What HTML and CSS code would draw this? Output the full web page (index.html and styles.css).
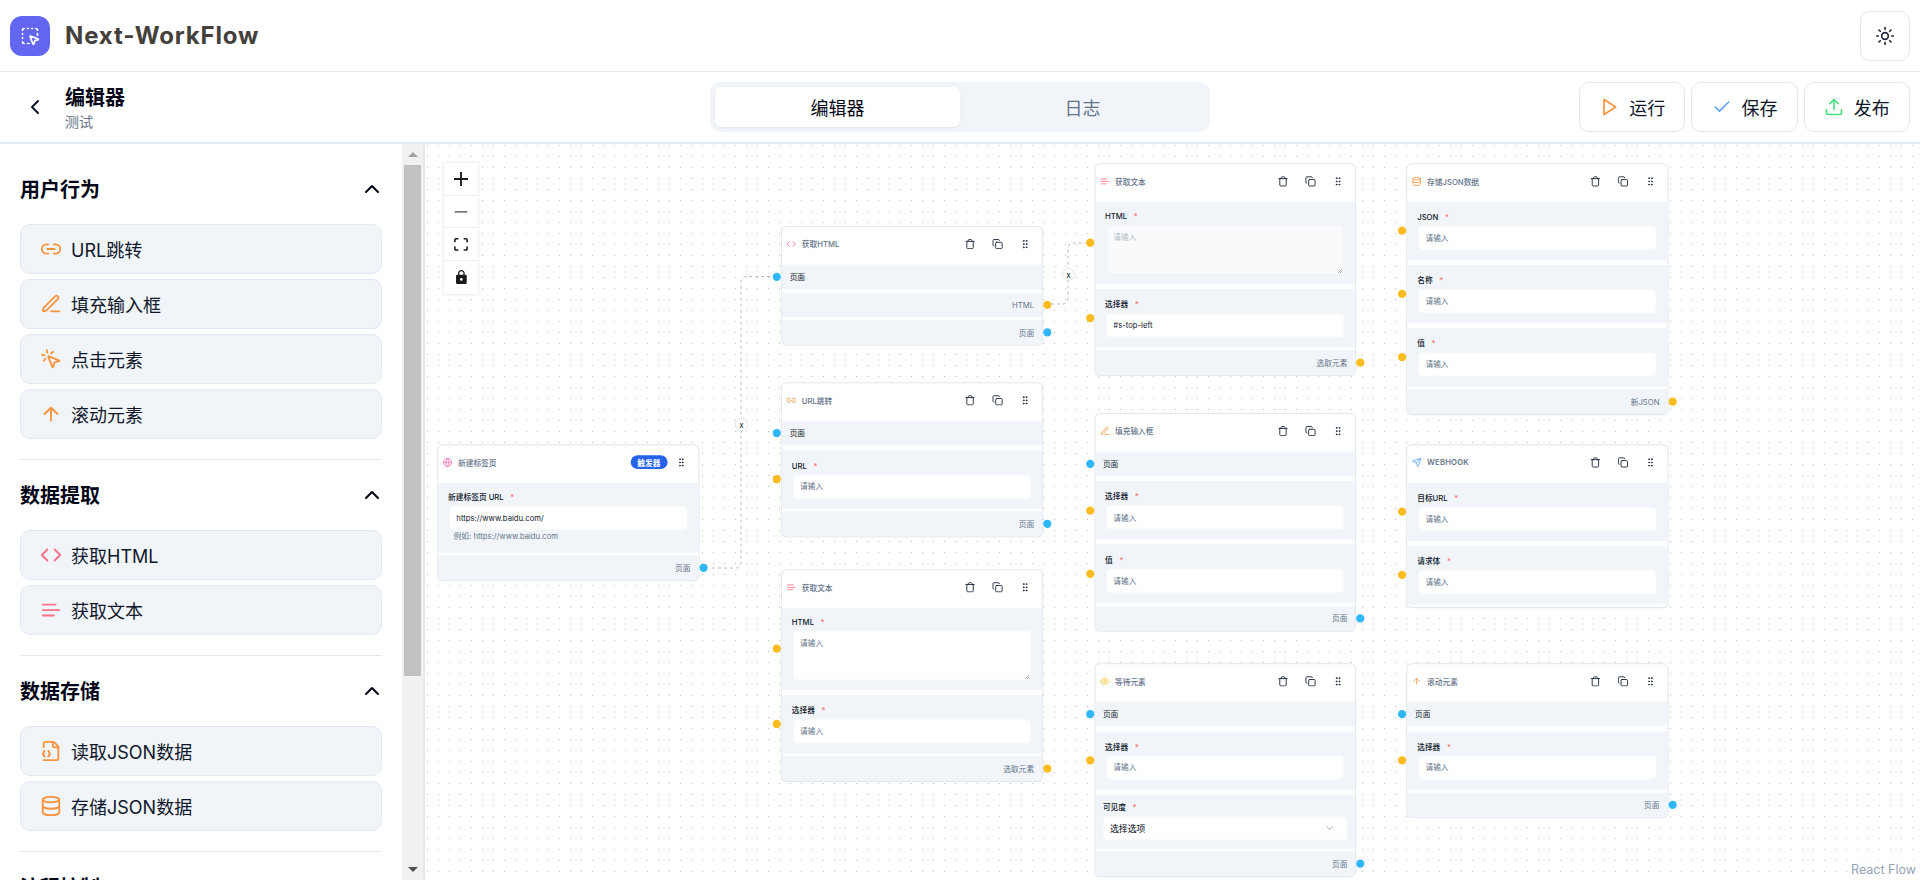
FILE: index.html
```html
<!DOCTYPE html>
<html lang="zh-CN">
<head>
  <meta charset="UTF-8">
  <meta name="viewport" content="width=device-width, initial-scale=1.0">
  <title>Next-WorkFlow</title>
  <link rel="stylesheet" href="styles.css">
</head>
<body>
  <svg class="sprites" aria-hidden="true">
    <symbol id="i-logo" viewBox="0 0 24 24"><path d="M12.034 12.681a.498.498 0 0 1 .647-.647l9 3.5a.5.5 0 0 1-.033.943l-3.444 1.068a1 1 0 0 0-.66.66l-1.067 3.443a.5.5 0 0 1-.943.033z"/><path d="M5 3a2 2 0 0 0-2 2"/><path d="M19 3a2 2 0 0 1 2 2"/><path d="M5 21a2 2 0 0 1-2-2"/><path d="M9 3h1"/><path d="M9 21h2"/><path d="M14 3h1"/><path d="M3 9v1"/><path d="M21 9v2"/><path d="M3 14v1"/></symbol>
    <symbol id="i-sun" viewBox="0 0 24 24"><circle cx="12" cy="12" r="4"/><path d="M12 2v2"/><path d="M12 20v2"/><path d="m4.93 4.93 1.41 1.41"/><path d="m17.66 17.66 1.41 1.41"/><path d="M2 12h2"/><path d="M20 12h2"/><path d="m6.34 17.66-1.41 1.41"/><path d="m19.07 4.93-1.41 1.41"/></symbol>
    <symbol id="i-left" viewBox="0 0 24 24"><path d="m15 18-6-6 6-6"/></symbol>
    <symbol id="i-up" viewBox="0 0 24 24"><path d="m18 15-6-6-6 6"/></symbol>
    <symbol id="i-down" viewBox="0 0 24 24"><path d="m6 9 6 6 6-6"/></symbol>
    <symbol id="i-play" viewBox="0 0 24 24"><polygon points="6 3 20 12 6 21 6 3"/></symbol>
    <symbol id="i-check" viewBox="0 0 24 24"><path d="M20 6 9 17l-5-5"/></symbol>
    <symbol id="i-upload" viewBox="0 0 24 24"><path d="M21 15v4a2 2 0 0 1-2 2H5a2 2 0 0 1-2-2v-4"/><polyline points="17 8 12 3 7 8"/><line x1="12" x2="12" y1="3" y2="15"/></symbol>
    <symbol id="i-link" viewBox="0 0 24 24"><path d="M9 17H7A5 5 0 0 1 7 7h2"/><path d="M15 7h2a5 5 0 1 1 0 10h-2"/><line x1="8" x2="16" y1="12" y2="12"/></symbol>
    <symbol id="i-pen" viewBox="0 0 24 24"><path d="M12 20h9"/><path d="M16.376 3.622a1 1 0 0 1 3.002 3.002L7.368 18.635a2 2 0 0 1-.855.506l-2.872.838a.5.5 0 0 1-.62-.62l.838-2.872a2 2 0 0 1 .506-.854z"/></symbol>
    <symbol id="i-click" viewBox="0 0 24 24"><path d="M14 4.1 12 6"/><path d="m5.1 8-2.9-.8"/><path d="m6 12-1.9 2"/><path d="M7.2 2.2 8 5.1"/><path d="M9.037 9.69a.498.498 0 0 1 .653-.653l11 4.5a.5.5 0 0 1-.074.949l-4.349 1.041a1 1 0 0 0-.74.739l-1.04 4.35a.5.5 0 0 1-.95.074z"/></symbol>
    <symbol id="i-arrow" viewBox="0 0 24 24"><path d="m5 12 7-7 7 7"/><path d="M12 19V5"/></symbol>
    <symbol id="i-code" viewBox="0 0 24 24"><path d="m16 18 6-6-6-6"/><path d="m8 6-6 6 6 6"/></symbol>
    <symbol id="i-text" viewBox="0 0 24 24"><path d="M17 6.1H3"/><path d="M21 12.1H3"/><path d="M15.1 18H3"/></symbol>
    <symbol id="i-file" viewBox="0 0 24 24"><path d="M4 22h14a2 2 0 0 0 2-2V7l-5-5H6a2 2 0 0 0-2 2v4"/><path d="M14 2v4a2 2 0 0 0 2 2h4"/><path d="M5 12a1 1 0 0 0-1 1v1a1 1 0 0 1-1 1 1 1 0 0 1 1 1v1a1 1 0 0 0 1 1"/><path d="M9 18a1 1 0 0 0 1-1v-1a1 1 0 0 1 1-1 1 1 0 0 1-1-1v-1a1 1 0 0 0-1-1"/></symbol>
    <symbol id="i-db" viewBox="0 0 24 24"><ellipse cx="12" cy="5" rx="9" ry="3"/><path d="M3 5V19A9 3 0 0 0 21 19V5"/><path d="M3 12A9 3 0 0 0 21 12"/></symbol>
    <symbol id="i-globe" viewBox="0 0 24 24"><circle cx="12" cy="12" r="10"/><path d="M12 2a14.5 14.5 0 0 0 0 20 14.5 14.5 0 0 0 0-20"/><path d="M2 12h20"/></symbol>
    <symbol id="i-eye" viewBox="0 0 24 24"><path d="M2.062 12.348a1 1 0 0 1 0-.696 10.75 10.75 0 0 1 19.876 0 1 1 0 0 1 0 .696 10.75 10.75 0 0 1-19.876 0"/><circle cx="12" cy="12" r="3"/></symbol>
    <symbol id="i-send" viewBox="0 0 24 24"><path d="M14.536 21.686a.5.5 0 0 0 .937-.024l6.5-19a.496.496 0 0 0-.635-.635l-19 6.5a.5.5 0 0 0-.024.937l7.93 3.18a2 2 0 0 1 1.112 1.11z"/><path d="m21.854 2.147-10.94 10.939"/></symbol>
    <symbol id="i-trash" viewBox="0 0 24 24"><path d="M3 6h18"/><path d="M19 6v14c0 1-1 2-2 2H7c-1 0-2-1-2-2V6"/><path d="M8 6V4c0-1 1-2 2-2h4c1 0 2 1 2 2v2"/></symbol>
    <symbol id="i-copy" viewBox="0 0 24 24"><rect x="8" y="8" width="14" height="14" rx="2"/><path d="M4 16c-1.1 0-2-.9-2-2V4c0-1.1.9-2 2-2h10c1.1 0 2 .9 2 2"/></symbol>
    <symbol id="i-grip" viewBox="0 0 24 24"><circle cx="9" cy="12" r="1"/><circle cx="9" cy="5" r="1"/><circle cx="9" cy="19" r="1"/><circle cx="15" cy="12" r="1"/><circle cx="15" cy="5" r="1"/><circle cx="15" cy="19" r="1"/></symbol>
  </svg>

  <header class="topbar">
    <div class="brand">
      <span class="logo"><svg class="icon logo-icon"><use href="#i-logo"/></svg></span>
      <span class="brand-name">Next-WorkFlow</span>
    </div>
    <button class="btn btn-square"><svg class="icon icon-20"><use href="#i-sun"/></svg></button>
  </header>

  <div class="subbar">
    <div class="page-title">
      <svg class="icon icon-24 back"><use href="#i-left"/></svg>
      <div>
        <div class="page-name">编辑器</div>
        <div class="page-sub">测试</div>
      </div>
    </div>
    <div class="tabs">
      <div class="tab tab-active">编辑器</div>
      <div class="tab">日志</div>
    </div>
    <div class="actions">
      <button class="btn btn-action"><svg class="icon icon-20 c-orange"><use href="#i-play"/></svg>运行</button>
      <button class="btn btn-action"><svg class="icon icon-20 c-blue"><use href="#i-check"/></svg>保存</button>
      <button class="btn btn-action"><svg class="icon icon-20 c-green"><use href="#i-upload"/></svg>发布</button>
    </div>
  </div>

  <main class="main">
    <aside class="sidebar">
      <div class="palette">
        <section class="group">
          <div class="group-head">用户行为<svg class="icon icon-24"><use href="#i-up"/></svg></div>
          <div class="item"><svg class="icon icon-22 c-orange"><use href="#i-link"/></svg>URL跳转</div>
          <div class="item"><svg class="icon icon-22 c-orange"><use href="#i-pen"/></svg>填充输入框</div>
          <div class="item"><svg class="icon icon-22 c-orange"><use href="#i-click"/></svg>点击元素</div>
          <div class="item"><svg class="icon icon-22 c-orange"><use href="#i-arrow"/></svg>滚动元素</div>
        </section>
        <section class="group">
          <div class="group-head">数据提取<svg class="icon icon-24"><use href="#i-up"/></svg></div>
          <div class="item"><svg class="icon icon-22 c-rose"><use href="#i-code"/></svg>获取HTML</div>
          <div class="item"><svg class="icon icon-22 c-rose"><use href="#i-text"/></svg>获取文本</div>
        </section>
        <section class="group">
          <div class="group-head">数据存储<svg class="icon icon-24"><use href="#i-up"/></svg></div>
          <div class="item"><svg class="icon icon-22 c-orange"><use href="#i-file"/></svg>读取JSON数据</div>
          <div class="item"><svg class="icon icon-22 c-orange"><use href="#i-db"/></svg>存储JSON数据</div>
        </section>
        <section class="group">
          <div class="group-head">流程控制<svg class="icon icon-24"><use href="#i-up"/></svg></div>
        </section>
      </div>
      <div class="scrollbar">
        <span class="scroll-up"></span>
        <span class="scroll-thumb"></span>
        <span class="scroll-down"></span>
      </div>
    </aside>

    <div class="canvas">
      <svg class="edges">
        <path d="M287 424H311a5 5 0 0 0 5-5V137.500a5 5 0 0 1 5-5H348"/>
        <path d="M626 160H638a5 5 0 0 0 5-5V104a5 5 0 0 1 5-5H661"/>
      </svg>

      <div class="viewport">
        <div class="node n-tab">
          <div class="node-head">
            <svg class="icon node-icon c-pink"><use href="#i-globe"/></svg>
            <span class="node-title">新建标签页</span>
            <div class="node-tools">
              <span class="badge">触发器</span>
              <span class="tool"><svg class="icon tool-icon"><use href="#i-grip"/></svg></span>
            </div>
          </div>
          <div class="sect field field-hint">
            <label class="lbl">新建标签页 URL<i class="req">*</i></label>
            <input class="inp" value="https://www.baidu.com/">
            <div class="hint">例如: https://www.baidu.com</div>
          </div>
          <div class="sect out"><span class="handle right blue"></span>页面</div>
        </div>

        <div class="node n-html">
          <div class="node-head">
            <svg class="icon node-icon c-rose"><use href="#i-code"/></svg>
            <span class="node-title">获取HTML</span>
            <div class="node-tools">
              <span class="tool"><svg class="icon tool-icon"><use href="#i-trash"/></svg></span>
              <span class="tool"><svg class="icon tool-icon"><use href="#i-copy"/></svg></span>
              <span class="tool"><svg class="icon tool-icon"><use href="#i-grip"/></svg></span>
            </div>
          </div>
          <div class="sect in"><span class="handle left blue"></span>页面</div>
          <div class="sect out"><span class="handle right yellow"></span>HTML</div>
          <div class="sect out"><span class="handle right blue"></span>页面</div>
        </div>

        <div class="node n-url">
          <div class="node-head">
            <svg class="icon node-icon c-orange"><use href="#i-link"/></svg>
            <span class="node-title">URL跳转</span>
            <div class="node-tools">
              <span class="tool"><svg class="icon tool-icon"><use href="#i-trash"/></svg></span>
              <span class="tool"><svg class="icon tool-icon"><use href="#i-copy"/></svg></span>
              <span class="tool"><svg class="icon tool-icon"><use href="#i-grip"/></svg></span>
            </div>
          </div>
          <div class="sect in"><span class="handle left blue"></span>页面</div>
          <div class="sect field">
            <span class="handle left yellow"></span>
            <label class="lbl">URL<i class="req">*</i></label>
            <input class="inp" placeholder="请输入">
          </div>
          <div class="sect out"><span class="handle right blue"></span>页面</div>
        </div>

        <div class="node n-text1">
          <div class="node-head">
            <svg class="icon node-icon c-rose"><use href="#i-text"/></svg>
            <span class="node-title">获取文本</span>
            <div class="node-tools">
              <span class="tool"><svg class="icon tool-icon"><use href="#i-trash"/></svg></span>
              <span class="tool"><svg class="icon tool-icon"><use href="#i-copy"/></svg></span>
              <span class="tool"><svg class="icon tool-icon"><use href="#i-grip"/></svg></span>
            </div>
          </div>
          <div class="sect field field-area">
            <span class="handle left yellow"></span>
            <label class="lbl">HTML<i class="req">*</i></label>
            <textarea class="inp area" placeholder="请输入"></textarea>
          </div>
          <div class="sect field">
            <span class="handle left yellow"></span>
            <label class="lbl">选择器<i class="req">*</i></label>
            <input class="inp" placeholder="请输入">
          </div>
          <div class="sect out"><span class="handle right yellow"></span>选取元素</div>
        </div>

        <div class="node n-text2">
          <div class="node-head">
            <svg class="icon node-icon c-rose"><use href="#i-text"/></svg>
            <span class="node-title">获取文本</span>
            <div class="node-tools">
              <span class="tool"><svg class="icon tool-icon"><use href="#i-trash"/></svg></span>
              <span class="tool"><svg class="icon tool-icon"><use href="#i-copy"/></svg></span>
              <span class="tool"><svg class="icon tool-icon"><use href="#i-grip"/></svg></span>
            </div>
          </div>
          <div class="sect field field-area">
            <span class="handle left yellow"></span>
            <label class="lbl">HTML<i class="req">*</i></label>
            <textarea class="inp area" placeholder="请输入" disabled></textarea>
          </div>
          <div class="sect field">
            <span class="handle left yellow"></span>
            <label class="lbl">选择器<i class="req">*</i></label>
            <input class="inp" value="#s-top-left">
          </div>
          <div class="sect out"><span class="handle right yellow"></span>选取元素</div>
        </div>

        <div class="node n-fill">
          <div class="node-head">
            <svg class="icon node-icon c-orange"><use href="#i-pen"/></svg>
            <span class="node-title">填充输入框</span>
            <div class="node-tools">
              <span class="tool"><svg class="icon tool-icon"><use href="#i-trash"/></svg></span>
              <span class="tool"><svg class="icon tool-icon"><use href="#i-copy"/></svg></span>
              <span class="tool"><svg class="icon tool-icon"><use href="#i-grip"/></svg></span>
            </div>
          </div>
          <div class="sect in"><span class="handle left blue"></span>页面</div>
          <div class="sect field">
            <span class="handle left yellow"></span>
            <label class="lbl">选择器<i class="req">*</i></label>
            <input class="inp" placeholder="请输入">
          </div>
          <div class="sect field">
            <span class="handle left yellow"></span>
            <label class="lbl">值<i class="req">*</i></label>
            <input class="inp" placeholder="请输入">
          </div>
          <div class="sect out"><span class="handle right blue"></span>页面</div>
        </div>

        <div class="node n-wait">
          <div class="node-head">
            <svg class="icon node-icon c-amber"><use href="#i-eye"/></svg>
            <span class="node-title">等待元素</span>
            <div class="node-tools">
              <span class="tool"><svg class="icon tool-icon"><use href="#i-trash"/></svg></span>
              <span class="tool"><svg class="icon tool-icon"><use href="#i-copy"/></svg></span>
              <span class="tool"><svg class="icon tool-icon"><use href="#i-grip"/></svg></span>
            </div>
          </div>
          <div class="sect in"><span class="handle left blue"></span>页面</div>
          <div class="sect field">
            <span class="handle left yellow"></span>
            <label class="lbl">选择器<i class="req">*</i></label>
            <input class="inp" placeholder="请输入">
          </div>
          <div class="sect field field-select">
            <label class="lbl">可见度<i class="req">*</i></label>
            <button class="select">选择选项<svg class="icon select-icon"><use href="#i-down"/></svg></button>
          </div>
          <div class="sect out"><span class="handle right blue"></span>页面</div>
        </div>

        <div class="node n-json">
          <div class="node-head">
            <svg class="icon node-icon c-orange"><use href="#i-db"/></svg>
            <span class="node-title">存储JSON数据</span>
            <div class="node-tools">
              <span class="tool"><svg class="icon tool-icon"><use href="#i-trash"/></svg></span>
              <span class="tool"><svg class="icon tool-icon"><use href="#i-copy"/></svg></span>
              <span class="tool"><svg class="icon tool-icon"><use href="#i-grip"/></svg></span>
            </div>
          </div>
          <div class="sect field">
            <span class="handle left yellow"></span>
            <label class="lbl">JSON<i class="req">*</i></label>
            <input class="inp" placeholder="请输入">
          </div>
          <div class="sect field">
            <span class="handle left yellow"></span>
            <label class="lbl">名称<i class="req">*</i></label>
            <input class="inp" placeholder="请输入">
          </div>
          <div class="sect field">
            <span class="handle left yellow"></span>
            <label class="lbl">值<i class="req">*</i></label>
            <input class="inp" placeholder="请输入">
          </div>
          <div class="sect out"><span class="handle right yellow"></span>新JSON</div>
        </div>

        <div class="node n-hook">
          <div class="node-head">
            <svg class="icon node-icon c-blue"><use href="#i-send"/></svg>
            <span class="node-title node-title-caps">WEBHOOK</span>
            <div class="node-tools">
              <span class="tool"><svg class="icon tool-icon"><use href="#i-trash"/></svg></span>
              <span class="tool"><svg class="icon tool-icon"><use href="#i-copy"/></svg></span>
              <span class="tool"><svg class="icon tool-icon"><use href="#i-grip"/></svg></span>
            </div>
          </div>
          <div class="sect field">
            <span class="handle left yellow"></span>
            <label class="lbl">目标URL<i class="req">*</i></label>
            <input class="inp" placeholder="请输入">
          </div>
          <div class="sect field">
            <span class="handle left yellow"></span>
            <label class="lbl">请求体<i class="req">*</i></label>
            <input class="inp" placeholder="请输入">
          </div>
        </div>

        <div class="node n-scroll">
          <div class="node-head">
            <svg class="icon node-icon c-orange"><use href="#i-arrow"/></svg>
            <span class="node-title">滚动元素</span>
            <div class="node-tools">
              <span class="tool"><svg class="icon tool-icon"><use href="#i-trash"/></svg></span>
              <span class="tool"><svg class="icon tool-icon"><use href="#i-copy"/></svg></span>
              <span class="tool"><svg class="icon tool-icon"><use href="#i-grip"/></svg></span>
            </div>
          </div>
          <div class="sect in"><span class="handle left blue"></span>页面</div>
          <div class="sect field">
            <span class="handle left yellow"></span>
            <label class="lbl">选择器<i class="req">*</i></label>
            <input class="inp" placeholder="请输入">
          </div>
          <div class="sect out"><span class="handle right blue"></span>页面</div>
        </div>
      </div>

      <button class="edge-btn edge-a">x</button>
      <button class="edge-btn edge-b">x</button>

      <div class="controls">
        <button class="ctrl"><svg class="ctrl-plus" viewBox="0 0 32 32"><path d="M32 18.133H18.133V32h-4.266V18.133H0v-4.266h13.867V0h4.266v13.867H32z"/></svg></button>
        <button class="ctrl"><svg class="ctrl-minus" viewBox="0 0 32 5"><path d="M0 0h32v4.200H0z"/></svg></button>
        <button class="ctrl"><svg class="ctrl-fit" viewBox="0 0 32 30"><path d="M3.692 4.630c0-.53.4-.938.939-.938h5.215V0H4.708C2.130 0 0 2.054 0 4.630v5.216h3.692V4.631zM27.354 0h-5.200v3.692h5.170c.53 0 .984.4.984.939v5.215H32V4.631A4.624 4.624 0 0027.354 0zm.954 24.830c0 .532-.4.940-.939.940h-5.215v3.768h5.215c2.577 0 4.631-2.130 4.631-4.707v-5.139h-3.692v5.139zm-23.677.940c-.531 0-.939-.4-.939-.940v-5.138H0v5.139c0 2.577 2.130 4.707 4.708 4.707h5.138V25.770H4.631z"/></svg></button>
        <button class="ctrl"><svg class="ctrl-lock" viewBox="0 0 25 32"><path d="M21.333 10.667H19.810V7.619C19.810 3.429 16.380 0 12.190 0 8 0 4.571 3.429 4.571 7.619v3.048H3.048A3.056 3.056 0 000 13.714v15.238A3.056 3.056 0 003.048 32h18.285a3.056 3.056 0 003.048-3.048V13.714a3.056 3.056 0 00-3.048-3.047zM12.190 24.533a3.056 3.056 0 01-3.047-3.047 3.056 3.056 0 013.047-3.048 3.056 3.056 0 013.048 3.048 3.056 3.056 0 01-3.048 3.047zm4.724-13.866H7.467V7.619c0-2.590 2.133-4.724 4.723-4.724 2.591 0 4.724 2.133 4.724 4.724v3.048z"/></svg></button>
      </div>

      <div class="attribution">React Flow</div>
    </div>
  </main>
</body>
</html>
```

FILE: styles.css
```css
* {
  box-sizing: border-box;
}
html, body {
  margin: 0;
  height: 100%;
}
body {
  display: flex;
  flex-direction: column;
  height: 880px;
  overflow: hidden;
  background: #fff;
  color: #0f172a;
  font-family: Inter, "Noto Sans CJK SC", sans-serif;
}
button {
  font-family: inherit;
  color: inherit;
  background: none;
  border: 0;
  padding: 0;
}
.sprites {
  display: none;
}
.icon {
  fill: none;
  stroke: currentColor;
  stroke-width: 2;
  stroke-linecap: round;
  stroke-linejoin: round;
  flex: none;
}
.icon-20 { width: 20px; height: 20px; }
.icon-22 { width: 22px; height: 22px; }
.icon-24 { width: 24px; height: 24px; }
.c-orange { color: #fb923c; }
.c-blue { color: #60a5fa; }
.c-green { color: #4ade80; }
.c-rose { color: #fb7185; }
.c-pink { color: #f472b6; }
.c-amber { color: #fbbf24; }

/* top bars */
.topbar {
  flex: none;
  height: 72px;
  padding: 0 10px;
  display: flex;
  align-items: center;
  justify-content: space-between;
  border-bottom: 1px solid #e2e8f0;
}
.brand {
  display: flex;
  align-items: center;
  gap: 15px;
}
.logo {
  width: 40px;
  height: 40px;
  border-radius: 12px;
  background: #6366f1;
  color: #fff;
  display: flex;
  align-items: center;
  justify-content: center;
}
.logo-icon {
  width: 20px;
  height: 20px;
}
.brand-name {
  font-size: 24px;
  font-weight: 700;
  letter-spacing: .85px;
  color: #44403c;
}
.btn {
  border: 1px solid #e2e8f0;
  border-radius: 10px;
  background: #fff;
  display: flex;
  align-items: center;
  justify-content: center;
}
.btn-square {
  width: 50px;
  height: 50px;
  color: #1e293b;
}
.subbar {
  flex: none;
  height: 72px;
  padding: 0 10px;
  display: grid;
  grid-template-columns: 700px 500px 1fr;
  align-items: center;
  border-bottom: 2px solid #e2e8f0;
}
.page-title {
  display: flex;
  align-items: center;
  gap: 18px;
  padding-left: 13px;
}
.page-name {
  padding-top: 1px;
  font-size: 20px;
  font-weight: 700;
  line-height: 28px;
  color: #020617;
}
.page-sub {
  font-size: 14px;
  line-height: 20px;
  color: #64748b;
}
.tabs {
  height: 50px;
  padding: 5px;
  border-radius: 10px;
  background: #f1f5f9;
  display: grid;
  grid-template-columns: 1fr 1fr;
}
.tab {
  border-radius: 6px;
  display: flex;
  align-items: center;
  justify-content: center;
  font-size: 18px;
  color: #64748b;
}
.tab-active {
  background: #fff;
  color: #020617;
  box-shadow: 0 1px 2px rgba(15, 23, 42, .08);
}
.actions {
  display: flex;
  justify-content: flex-end;
  gap: 6px;
}
.btn-action {
  width: 106.330px;
  height: 50px;
  gap: 10px;
  font-size: 18px;
  color: #0f172a;
}

/* sidebar */
.main {
  flex: 1;
  min-height: 0;
  display: flex;
}
.sidebar {
  flex: none;
  width: 425px;
  height: 100%;
  display: flex;
  border-right: 2px solid #e2e8f0;
}
.palette {
  flex: 1;
  min-width: 0;
  padding: 20px 20px 0;
  overflow: hidden;
}
.scrollbar {
  flex: none;
  width: 21px;
  padding: 0 2px;
  display: flex;
  flex-direction: column;
  align-items: center;
  background: #f1f1f1;
}
.scroll-up, .scroll-down {
  flex: none;
  width: 0;
  height: 0;
  border-style: solid;
  border-color: transparent;
}
.scroll-up {
  margin: 8px 0 8px;
  border-width: 0 5px 5px;
  border-bottom-color: #a3a3a3;
}
.scroll-thumb {
  flex: none;
  width: 100%;
  height: 511px;
  background: #c1c1c1;
}
.scroll-down {
  margin: auto 0 8px;
  border-width: 5px 5px 0;
  border-top-color: #505050;
}
.group {
  padding-bottom: 20px;
  margin-bottom: 10px;
  border-bottom: 1px solid #e2e8f0;
}
.group-head {
  height: 50px;
  margin-bottom: 10px;
  padding-bottom: 2px;
  display: flex;
  align-items: center;
  justify-content: space-between;
  font-size: 20px;
  font-weight: 700;
  color: #020617;
}
.group-head .icon {
  margin: 2px -2px 0 0;
}
.item {
  height: 50px;
  margin-top: 5px;
  padding: 0 19px;
  display: flex;
  align-items: center;
  gap: 9px;
  border: 1px solid #e2e8f0;
  border-radius: 10px;
  background: #f1f5f9;
  font-size: 18px;
}
.group-head + .item {
  margin-top: 0;
}

/* flow canvas */
.canvas {
  flex: 1;
  position: relative;
  overflow: hidden;
  background-image: radial-gradient(circle at center, #bcbcc2 .7px, transparent 1px);
  background-size: 11px 11px;
  background-position: -3px -4px;
}
.edges {
  position: absolute;
  left: 0;
  top: 0;
  width: 100%;
  height: 100%;
  fill: none;
  stroke: #bbb;
  stroke-width: 1;
  stroke-dasharray: 3 3;
}
.viewport {
  position: absolute;
  left: 0;
  top: 0;
  transform: scale(.55);
  transform-origin: 0 0;
}
.node {
  position: absolute;
  width: 476.500px;
  border: 2px solid #e2e8f0;
  border-radius: 10px;
  background: #fff;
  font-size: 14px;
}
.n-tab { left: 22px; top: 545.500px; }
.n-html { left: 647px; top: 149px; }
.n-url { left: 647px; top: 432.700px; }
.n-text1 { left: 647px; top: 772.700px; }
.n-text2 { left: 1216.500px; top: 34.500px; }
.n-fill { left: 1216.500px; top: 489px; }
.n-wait { left: 1216.500px; top: 943.500px; }
.n-json { left: 1784px; top: 34.500px; }
.n-hook { left: 1784px; top: 545.500px; }
.n-scroll { left: 1784px; top: 943.500px; }
.node-head {
  height: 68px;
  padding: 0 6px 6px 8px;
  display: flex;
  align-items: center;
  gap: 10px;
}
.node-icon {
  width: 18px;
  height: 18px;
}
.node-title {
  font-weight: 500;
  color: #64748b;
}
.node-title-caps {
  font-weight: 600;
  letter-spacing: .3px;
}
.node-tools {
  margin-left: auto;
  display: flex;
  align-items: center;
}
.tool {
  width: 50px;
  display: flex;
  justify-content: center;
  color: #1e293b;
}
.tool-icon {
  width: 20px;
  height: 20px;
}
.badge {
  width: 67px;
  height: 25px;
  border-radius: 13px;
  background: #2563eb;
  color: #fff;
  font-weight: 600;
  display: flex;
  align-items: center;
  justify-content: center;
}
.sect {
  position: relative;
  margin-bottom: 5.500px;
  background: #f1f5f9;
}
.sect + .field {
  margin-top: 9px;
}
.in, .out {
  height: 45px;
  display: flex;
  align-items: center;
  padding: 0 14px;
}
.in {
  color: #0f172a;
}
.out {
  justify-content: flex-end;
  color: #64748b;
}
.out:last-child {
  margin-bottom: 0;
  border-radius: 0 0 8px 8px;
}
.handle {
  position: absolute;
  top: 50%;
  width: 15px;
  height: 15px;
  margin-top: -7.500px;
  border-radius: 50%;
}
.handle.left { left: -17px; }
.handle.right { right: -17px; }
.handle.blue { background: #2fb6fb; }
.handle.yellow { background: #fcbb1e; }
.field {
  height: 106px;
  padding: 18px 20px 0;
}
.field-hint {
  height: 127px;
  padding-top: 16px;
}
.field-area {
  height: 150px;
  padding-top: 16px;
}
.field-select {
  height: 98px;
  padding: 13px 14px 0;
}
.lbl {
  display: block;
  height: 20px;
  line-height: 20px;
  margin: 0 0 6px -2px;
  font-weight: 500;
  color: #0f172a;
}
.field-select .lbl {
  margin-left: 0;
}
.req {
  margin-left: 12px;
  font-style: normal;
  color: #f87171;
}
.inp {
  display: block;
  width: 100%;
  height: 44px;
  padding: 0 11px;
  border: 2px solid #f8fafc;
  border-radius: 8px;
  background: #fff;
  outline: 0;
  color: #0f172a;
  font: inherit;
}
.inp::placeholder {
  color: #64748b;
}
.area {
  height: 90px;
  padding: 10px 11px;
}
.area:disabled {
  background: #f8fafc;
  border-color: #f1f5f9;
}
.area:disabled::placeholder {
  color: #b6bfcb;
}
.hint {
  margin: 2px 0 0 8px;
  line-height: 20px;
  color: #64748b;
}
.select {
  width: 100%;
  height: 44px;
  padding: 0 20px 0 11px;
  display: flex;
  align-items: center;
  justify-content: space-between;
  border: 2px solid #f8fafc;
  border-radius: 8px;
  background: #fff;
  color: #020617;
  font-size: 16px;
}
.select-icon {
  width: 20px;
  height: 20px;
  color: #94a3b8;
}
.edge-btn {
  position: absolute;
  width: 13px;
  height: 13px;
  border: 1px solid #e2e8f0;
  border-radius: 50%;
  background: #fff;
  font-size: 8px;
  line-height: 10px;
  text-align: center;
  color: #0f172a;
}
.edge-a { left: 310px; top: 274px; }
.edge-b { left: 637px; top: 124px; }
.controls {
  position: absolute;
  left: 19px;
  top: 19px;
  width: 34px;
  background: #fff;
  box-shadow: 0 0 2px 1px rgba(0, 0, 0, .08);
}
.ctrl {
  width: 100%;
  height: 32.700px;
  display: flex;
  align-items: center;
  justify-content: center;
  border-bottom: 1px solid #eee;
}
.ctrl:last-child {
  border-bottom: 0;
}
.ctrl svg {
  display: block;
  fill: #1a1a1a;
}
.ctrl-plus { width: 14px; height: 14px; }
.ctrl-minus { width: 14px; height: 2px; fill: #777 !important; }
.ctrl-fit { width: 14px; height: 13px; }
.ctrl-lock { width: 11px; height: 14px; }
.attribution {
  position: absolute;
  right: 4px;
  bottom: 1px;
  padding: 2px 0;
  font-size: 12.500px;
  color: #94a3b8;
  background: rgba(255, 255, 255, .5);
}
```
